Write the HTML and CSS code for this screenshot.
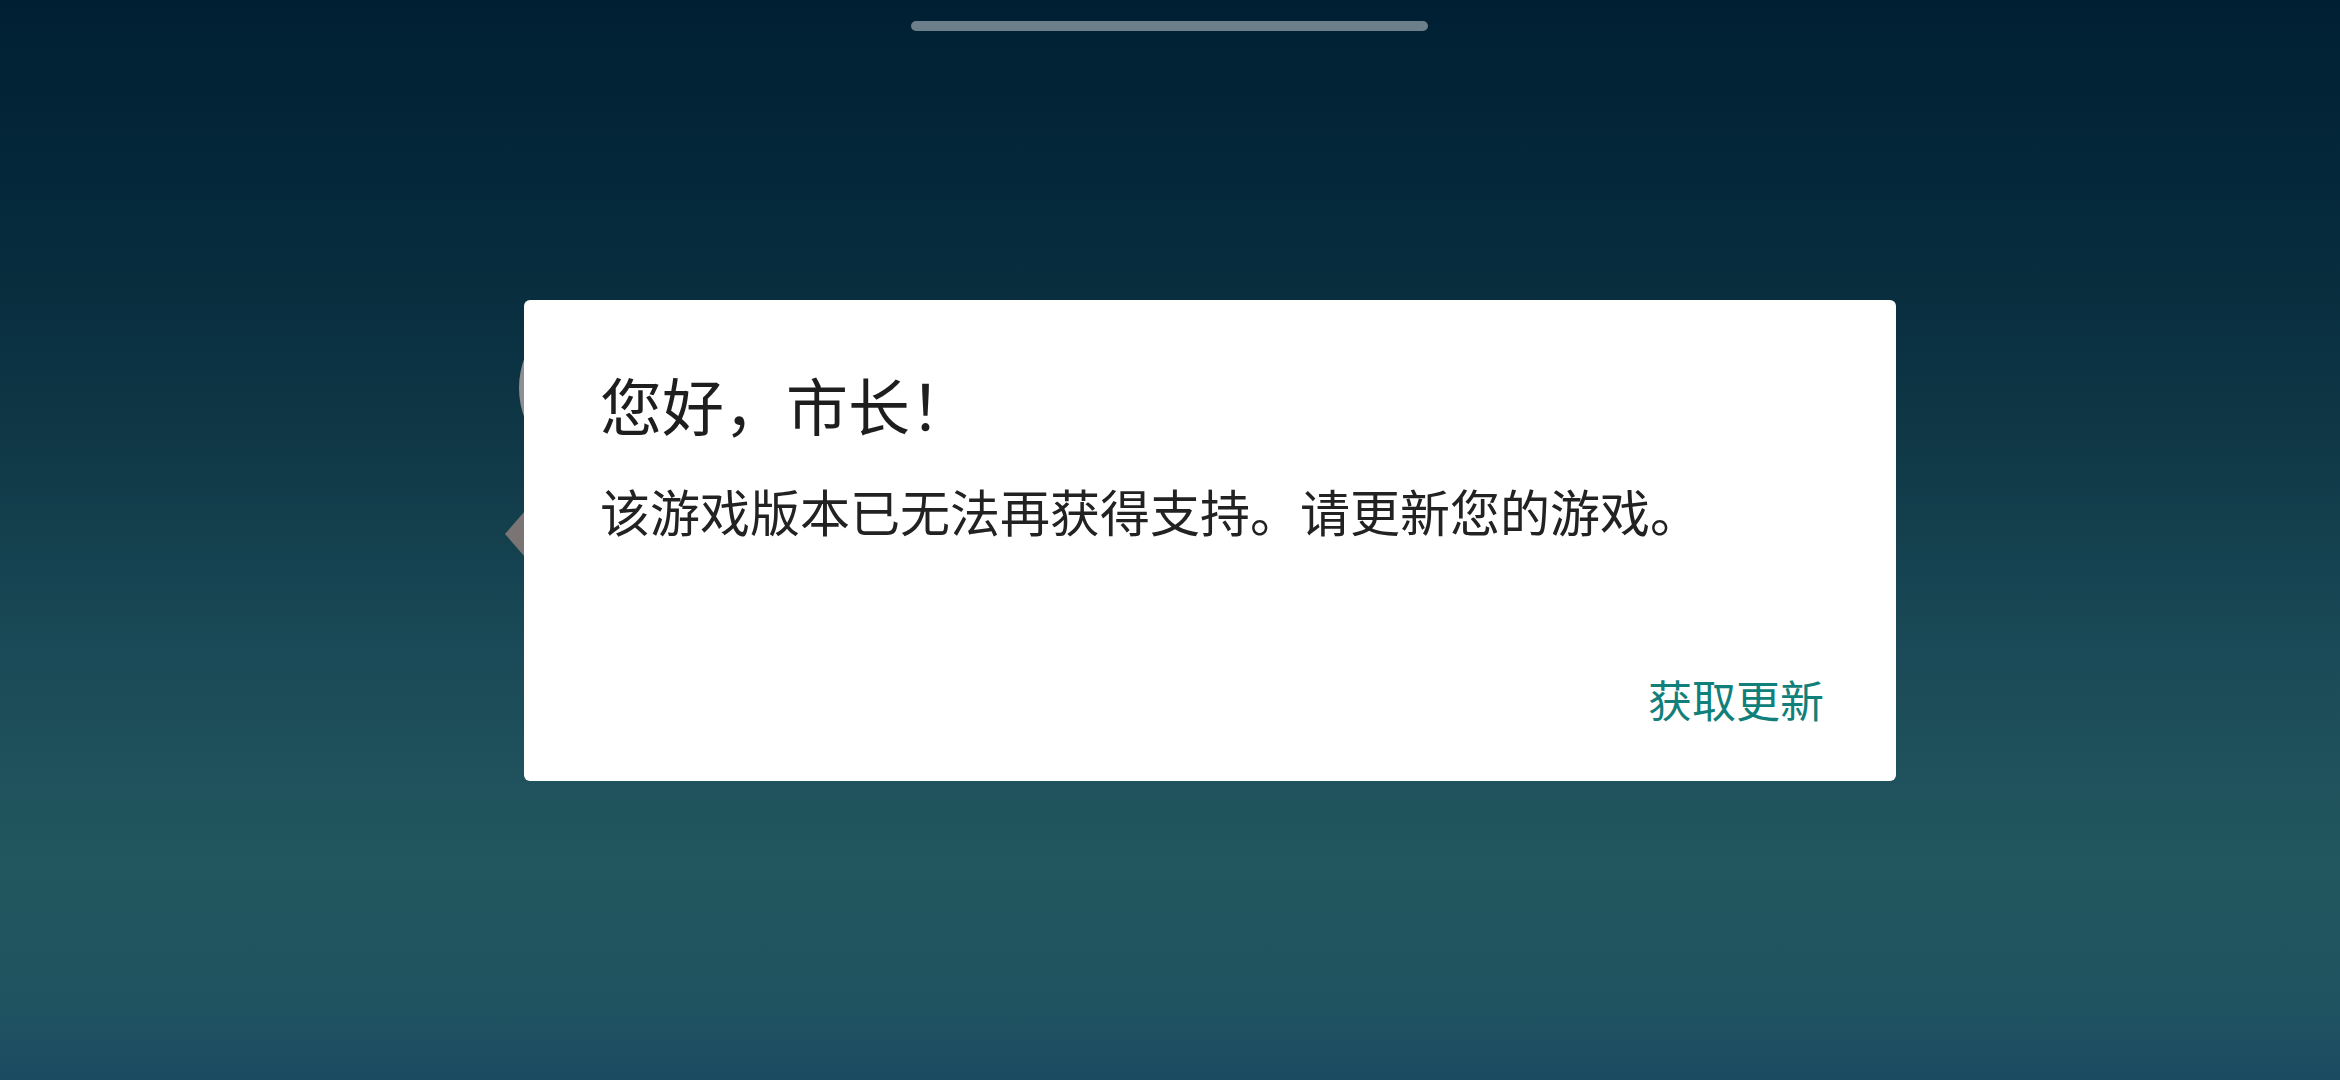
FILE: index.html
```html
<!DOCTYPE html>
<html lang="zh-CN">
<head>
  <meta charset="utf-8">
  <title>更新提示</title>
  <link rel="stylesheet" href="styles.css">
</head>
<body>
  <!-- game screen behind the dialog, mostly hidden -->
  <div class="backdrop">
    <div class="ghost-circle"></div>
    <svg class="ghost-arrow" width="30" height="60" viewBox="0 0 30 60">
      <polygon points="0,30 26,0 30,0 30,60 26,60" fill="#7b7474"/>
    </svg>
  </div>

  <div class="home-bar"></div>

  <div class="overlay">
    <div class="dialog">
      <h1 class="dialog-title">您好，市长！</h1>
      <p class="dialog-text">该游戏版本已无法再获得支持。请更新您的游戏。</p>
      <div class="dialog-actions">
        <button class="dialog-btn">获取更新</button>
      </div>
    </div>
  </div>
</body>
</html>
```

FILE: styles.css
```css
html, body {
  margin: 0;
  height: 100%;
}

body {
  font-family: "Noto Sans CJK SC", "Noto Sans", sans-serif;
  background: linear-gradient(180deg, #001f33 0%, #052a3b 20%, #0f3746 40%, #1a4a57 60%, #22575f 80%, #205460 92%, #1b4b62 100%);
  overflow: hidden;
  position: relative;
}

.backdrop {
  position: absolute;
  inset: 0;
}

.ghost-circle {
  position: absolute;
  left: 519px;
  top: 304px;
  width: 168px;
  height: 168px;
  border-radius: 50%;
  background: #8d8f92;
}

.ghost-arrow {
  position: absolute;
  left: 505px;
  top: 504px;
}

.home-bar {
  position: absolute;
  top: 21px;
  left: 911px;
  width: 517px;
  height: 10px;
  border-radius: 5px;
  background: #6d7f8a;
}

.overlay {
  position: relative;
  height: 100%;
  display: flex;
  align-items: center;
  justify-content: center;
  padding-left: 80px;
  box-sizing: border-box;
}

.dialog {
  width: 1372px;
  height: 481px;
  box-sizing: border-box;
  background: #fff;
  border-radius: 6px;
  padding: 73px 72px 60px 76px;
  display: flex;
  flex-direction: column;
}

.dialog-title {
  margin: 0;
  font-size: 62px;
  line-height: 62px;
  font-weight: 400;
  color: #1e1e1e;
}

.dialog-text {
  margin: 50px 0 0;
  font-size: 50px;
  line-height: 50px;
  color: #222;
}

.dialog-actions {
  margin-top: auto;
  display: flex;
  justify-content: flex-end;
}

.dialog-btn {
  font-family: inherit;
  font-size: 44px;
  line-height: 44px;
  padding: 0;
  border: none;
  background: none;
  color: #12807a;
  cursor: pointer;
}
```
